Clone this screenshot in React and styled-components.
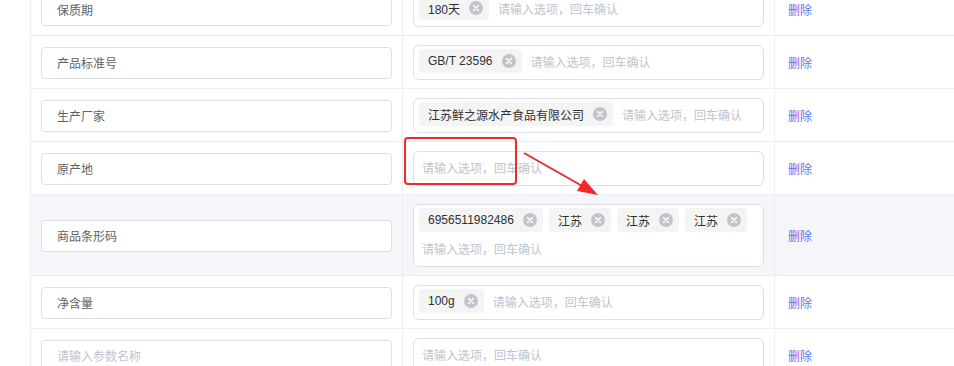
import React from 'react';
import styled, { createGlobalStyle } from 'styled-components';

const GlobalStyle = createGlobalStyle`
  html, body {
    margin: 0;
    padding: 0;
    background: #fff;
  }
  body {
    font-family: "Liberation Sans", "Noto Sans CJK SC", sans-serif;
    font-size: 12px;
  }
`;

const Page = styled.div`
  position: relative;
  width: 954px;
  height: 366px;
  overflow: hidden;
  background: #fff;
`;

const Table = styled.div`
  margin-top: -17px;
  margin-left: 30px;
  border-left: 1px solid #ebeef5;
`;

const Row = styled.div`
  display: grid;
  grid-template-columns: 372px 372px 1fr;
  border-bottom: 1px solid #ebeef5;
  background: ${(p) => (p.$active ? '#f5f6fa' : '#fff')};
`;

const Cell = styled.div`
  display: flex;
  align-items: center;
  padding: 9px 10px 8px;
  border-right: ${(p) => (p.$last ? 'none' : '1px solid #ebeef5')};
  min-height: 35px;
`;

const NameInput = styled.div`
  flex: 1;
  height: 30px;
  display: flex;
  align-items: center;
  padding: 0 15px;
  background: #fff;
  border: 1px solid #dcdfe6;
  border-radius: 4px;
  color: ${(p) => (p.$placeholder ? '#c0c4cc' : '#606266')};
`;

const TagBox = styled.div`
  flex: 1;
  display: flex;
  flex-wrap: wrap;
  align-items: center;
  column-gap: 6px;
  row-gap: 4px;
  padding: 3px 5px 6px;
  background: #fff;
  border: 1px solid #dcdfe6;
  border-radius: 6px;
`;

const Tag = styled.span`
  display: inline-flex;
  align-items: center;
  height: 24px;
  padding: 0 6px 0 9px;
  background: #f4f4f5;
  border-radius: 4px;
  color: #303133;
  white-space: nowrap;
`;

const Close = styled.span`
  display: inline-flex;
  align-items: center;
  justify-content: center;
  width: 14px;
  height: 14px;
  margin-left: 9px;
  border-radius: 50%;
  background: #c0c4cc;
`;

const Placeholder = styled.span`
  display: inline-flex;
  align-items: center;
  height: 24px;
  padding-left: 3px;
  color: #c0c4cc;
  white-space: nowrap;
`;

const DeleteLink = styled.span`
  padding-left: 3px;
  color: #5f72f2;
  cursor: pointer;
`;

const Overlay = styled.svg`
  position: absolute;
  left: 0;
  top: 0;
  pointer-events: none;
`;

const rows = [
  { name: '保质期', tags: ['180天'] },
  { name: '产品标准号', tags: ['GB/T 23596'] },
  { name: '生产厂家', tags: ['江苏鲜之源水产食品有限公司'] },
  { name: '原产地', tags: [] },
  { name: '商品条形码', tags: ['6956511982486', '江苏', '江苏', '江苏'], active: true },
  { name: '净含量', tags: ['100g'] },
  { name: '', tags: [] },
];

const CloseIcon = () => (
  <Close>
    <svg width="8" height="8" viewBox="0 0 8 8">
      <path d="M1.5 1.5 L6.5 6.5 M6.5 1.5 L1.5 6.5" stroke="#fff" strokeWidth="1.4" strokeLinecap="round" />
    </svg>
  </Close>
);

export default function App() {
  return (
    <Page>
      <GlobalStyle />
      <Table>
        {rows.map((row, i) => (
          <Row key={i} $active={row.active}>
            <Cell>
              <NameInput $placeholder={!row.name}>{row.name || '请输入参数名称'}</NameInput>
            </Cell>
            <Cell>
              <TagBox>
                {row.tags.map((t, j) => (
                  <Tag key={j}>
                    {t}
                    <CloseIcon />
                  </Tag>
                ))}
                <Placeholder>请输入选项，回车确认</Placeholder>
              </TagBox>
            </Cell>
            <Cell $last>
              <DeleteLink>删除</DeleteLink>
            </Cell>
          </Row>
        ))}
      </Table>
      <Overlay width="954" height="366" viewBox="0 0 954 366">
        <rect x="405" y="138" width="111" height="46" rx="3" fill="none" stroke="#f02a2a" strokeWidth="2" />
        <line x1="524" y1="153" x2="584" y2="187" stroke="#f02a2a" strokeWidth="2" />
        <polygon points="598,195 577,191 584,179" fill="#f02a2a" />
      </Overlay>
    </Page>
  );
}
